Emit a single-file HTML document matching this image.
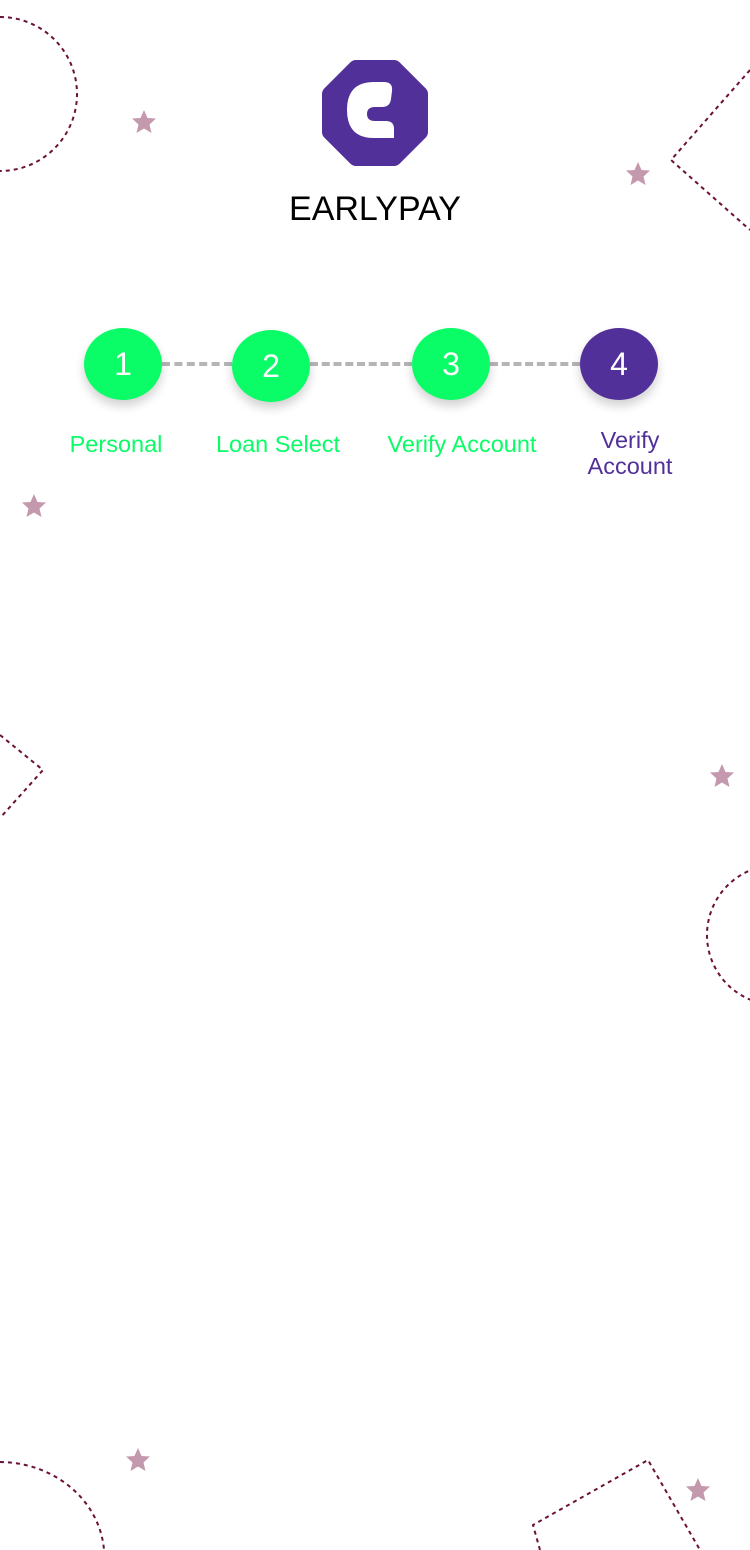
<!DOCTYPE html>
<html><head><meta charset="utf-8"><style>
html,body{margin:0;padding:0;background:#fff;}
body{width:750px;height:1550px;position:relative;overflow:hidden;font-family:"Liberation Sans",Arial,sans-serif;}
.abs{position:absolute;}
.c{position:absolute;width:78px;height:72px;border-radius:50%;background:#0afc66;color:#fff;font-size:32px;text-align:center;line-height:72px;box-shadow:0 6px 10px rgba(0,0,0,0.18);}
.c.p{background:#52309a;}
.lbl{position:absolute;font-size:23.5px;color:#0afc66;text-align:center;line-height:26px;}
.dash{position:absolute;height:0;border-top:4px dashed #b5b5b5;top:362px;}
</style></head><body>
<svg class="abs" style="left:0;top:0" width="750" height="1550" viewBox="0 0 750 1550">
<g fill="none" stroke="#6b1038" stroke-width="2" stroke-dasharray="4 4">
<path d="M0 17 A77 77 0 0 1 0 171"/>
<path d="M750 70 L671 160 L750 230"/>
<path d="M0 735 L43 770 L0 818"/>
<circle cx="777" cy="935" r="70"/>
<path d="M0 1462 A105 95 0 0 1 104 1550"/>
<path d="M540 1550 L533 1525 L648 1460 L700 1550"/>
</g>
<g fill="#c498ad">
<path id="st" d="M0 -12 L3.5 -4 L12 -3.5 L5.5 2.5 L7.5 11 L0 6.5 L-7.5 11 L-5.5 2.5 L-12 -3.5 L-3.5 -4Z" transform="translate(144 122)"/>
<use href="#st" transform="translate(494 52)"/>
<use href="#st" transform="translate(-110 384)"/>
<use href="#st" transform="translate(578 654)"/>
<use href="#st" transform="translate(-6 1338)"/>
<use href="#st" transform="translate(554 1368)"/>
</g>
<polygon points="356,68 394,68 420,94 420,132 394,158 356,158 330,132 330,94" fill="#52309a" stroke="#52309a" stroke-width="16" stroke-linejoin="round"/>
<path d="M374 82 L384 82 Q393 82 392 91 L391 99 Q390 107 382 107 L375 107 Q367 107 367 114 Q367 121 375 121 L386 121 Q394 121 394 129 L394 138 L374 138 Q347 138 347 110 Q347 82 374 82 Z" fill="#fff"/>
</svg>
<div class="abs" style="left:0;width:750px;top:190px;text-align:center;font-size:34px;color:#000;">EARLYPAY</div>
<div class="dash" style="left:162px;width:70px"></div>
<div class="dash" style="left:310px;width:102px"></div>
<div class="dash" style="left:490px;width:90px"></div>
<div class="c" style="left:84px;top:328px">1</div>
<div class="c" style="left:232px;top:330px">2</div>
<div class="c" style="left:412px;top:328px">3</div>
<div class="c p" style="left:580px;top:328px">4</div>
<div class="lbl" style="left:56px;width:120px;top:431px">Personal</div>
<div class="lbl" style="left:203px;width:150px;top:431px">Loan Select</div>
<div class="lbl" style="left:372px;width:180px;top:431px">Verify Account</div>
<div class="lbl" style="left:570px;width:120px;top:427px;color:#52309a">Verify<br>Account</div>
</body></html>
